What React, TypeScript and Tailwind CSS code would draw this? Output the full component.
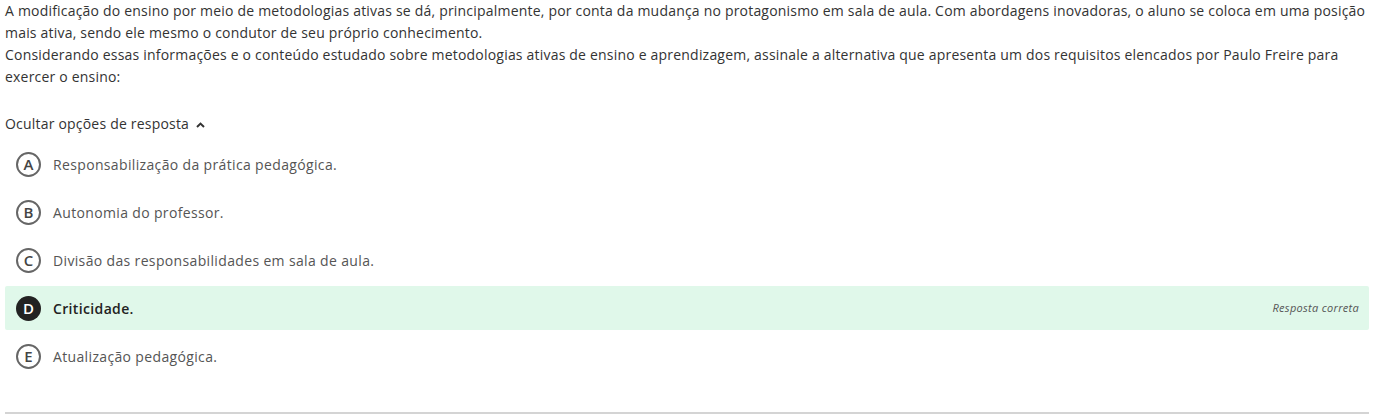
const options = [
  { letter: "A", text: "Responsabilização da prática pedagógica." },
  { letter: "B", text: "Autonomia do professor." },
  { letter: "C", text: "Divisão das responsabilidades em sala de aula." },
  { letter: "D", text: "Criticidade.", correct: true },
  { letter: "E", text: "Atualização pedagógica." },
];

function Chevron() {
  return (
    <svg width="9" height="6" viewBox="0 0 9 6" className="ml-[7px] mt-[2px]">
      <path d="M1 5 L4.5 1.6 L8 5" fill="none" stroke="#333" strokeWidth="2" />
    </svg>
  );
}

function Option({ letter, text, correct }: { letter: string; text: string; correct?: boolean }) {
  return (
    <div
      className={
        "flex h-[44px] items-center rounded-[2px] pl-[11px] pr-[10px] " +
        (correct ? "bg-[#e0f8ea]" : "")
      }
    >
      <span
        className={
          "flex h-[25px] w-[25px] shrink-0 items-center justify-center rounded-full text-[15px] font-semibold " +
          (correct
            ? "bg-[#222] font-bold text-white"
            : "border-2 border-[#666] text-[#444]")
        }
      >
        {letter}
      </span>
      <span
        className={
          "ml-[12px] text-[14px] tracking-[0.35px] " +
          (correct ? "font-semibold text-[#222]" : "text-[#555]")
        }
      >
        {text}
      </span>
      {correct && (
        <span className="ml-auto text-[11px] italic tracking-[0.3px] text-[#555]">Resposta correta</span>
      )}
    </div>
  );
}

export default function App() {
  return (
    <div className="min-h-[417px] bg-white pl-[5px] pr-[9px] font-['Open_Sans',sans-serif] text-[#333]">
      <div className="text-[14px] leading-[22px] tracking-[0.2px]">
        <p>
          A modificação do ensino por meio de metodologias ativas se dá, principalmente, por conta da mudança no
          protagonismo em sala de aula. Com abordagens inovadoras, o aluno se coloca em uma posição mais ativa, sendo
          ele mesmo o condutor de seu próprio conhecimento.
        </p>
        <p>
          Considerando essas informações e o conteúdo estudado sobre metodologias ativas de ensino e aprendizagem,
          assinale a alternativa que apresenta um dos requisitos elencados por Paulo Freire para exercer o ensino:
        </p>
      </div>
      <div className="mt-[25px] flex items-center text-[14px] leading-[22px] tracking-[0.2px]">
        Ocultar opções de resposta
        <Chevron />
      </div>
      <div className="mt-[7px] flex flex-col gap-[4px]">
        {options.map((o) => (
          <Option key={o.letter} {...o} />
        ))}
      </div>
      <div className="mt-[34px] border-b-2 border-[#d4d4d4]" />
    </div>
  );
}
